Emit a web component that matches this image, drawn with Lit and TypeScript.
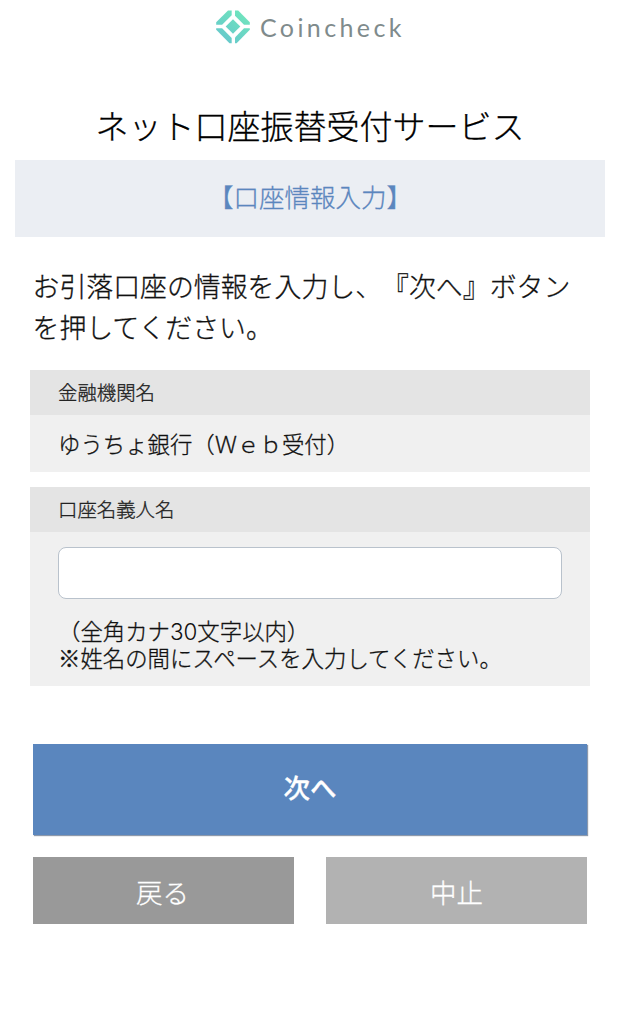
import { LitElement, html, css } from "lit";
import { customElement } from "lit/decorators.js";

@customElement("brand-logo")
class BrandLogo extends LitElement {
  static styles = css`
    :host { display: flex; justify-content: center; height: 56px; }
    .mark { display: block; margin-top: 9px; width: 36px; height: 36px; }
    .name {
      margin: 13px 0 0 9px;
      width: 145px;
      font: 400 25px/28px Lato, sans-serif;
      letter-spacing: 3.4px;
      color: #7f8b8c;
      white-space: nowrap;
    }
  `;
  render() {
    return html`
      <svg class="mark" viewBox="0 0 36 36">
        <defs>
          <linearGradient id="g" gradientUnits="userSpaceOnUse" x1="28" y1="4" x2="8" y2="32">
            <stop offset="0" stop-color="#70e4bd" />
            <stop offset="1" stop-color="#66c8cc" />
          </linearGradient>
        </defs>
        <g fill="url(#g)">
          <path d="M13 1.5H16.7V6.2L7.1 15.8H1.2V13.3Z" />
          <path d="M20 1.5H23.2L34.8 13.3V15.8H29L20 6.8Z" />
          <path d="M1.2 19.3H7.1L16.7 28.9V34.3H14.5L1.2 20.8Z" />
          <path d="M34.8 19.3H29L20 28.4V34.3H21.6L34.8 20.8Z" />
          <path d="M18 10.2L25.3 17.5L18 24.8L10.7 17.5Z" />
        </g>
      </svg>
      <span class="name">Coincheck</span>
    `;
  }
}

@customElement("form-section")
class FormSection extends LitElement {
  static properties = { label: {} };
  declare label: string;
  static styles = css`
    :host { display: block; background: #f0f0f0; }
    .label {
      height: 45px;
      padding: 0 28px;
      box-sizing: border-box;
      background: #e4e4e4;
      color: #222;
      font-size: 19.4px;
      line-height: 44px;
    }
  `;
  render() {
    return html`<div class="label">${this.label}</div><slot></slot>`;
  }
}

@customElement("app-root")
class AppRoot extends LitElement {
  static styles = css`
    :host {
      display: block;
      min-height: 1024px;
      background: #fff;
      color: #111;
      font-family: "Noto Sans CJK JP", sans-serif;
      font-weight: 300;
      text-spacing-trim: space-all;
      -webkit-text-stroke: 0.3px currentColor;
    }
    brand-logo { -webkit-text-stroke: 0; }
    .title {
      margin: 46px 0 0;
      height: 58px;
      text-align: center;
      font-size: 33px;
      font-weight: 300;
      line-height: 47px;
      color: #000;
    }
    .step {
      margin: 0 15px;
      height: 77px;
      background: #ebeef3;
      color: #5b86be;
      text-align: center;
      font-size: 25.5px;
      font-weight: 300;
      line-height: 72px;
    }
    .lead { margin: 28px 0 0 32.5px; height: 105px; font-size: 26.9px; line-height: 41px; white-space: nowrap; }
    .sections { display: flex; flex-direction: column; gap: 15px; margin: 0 30px; }
    .value { height: 57px; padding: 0 28px; font-size: 22.4px; line-height: 56px; }
    .field { padding: 15px 28px 14px; height: 125px; }
    .input {
      display: block;
      box-sizing: border-box;
      width: 504px;
      height: 52px;
      border: 1.5px solid #b9c2cc;
      border-radius: 8px;
      background: #fff;
      outline: none;
    }
    .note { margin: 18px 0 0; font-size: 22.4px; line-height: 27px; white-space: nowrap; }
    .digits { font-family: Inter, sans-serif; line-height: 1; -webkit-text-stroke: 0; }
    .actions { display: grid; grid-template-columns: 261px 261px; column-gap: 32px; row-gap: 22px; margin: 58px 33px 0; }
    button { border: 0; padding: 0; font: inherit; color: #fff; font-size: 26.5px; -webkit-text-stroke: inherit; }
    .next { grid-column: 1 / 3; height: 91px; padding-bottom: 6px; background: #5a86be; font-weight: 500; box-shadow: 1px 1px 1px #8d99ab; }
    .back { height: 67px; padding: 2px 2px 0 0; background: #999; }
    .stop { height: 67px; padding-top: 2px; background: #b2b2b2; }
  `;
  render() {
    return html`
      <brand-logo></brand-logo>
      <h1 class="title">ネット口座振替受付サービス</h1>
      <div class="step">【口座情報入力】</div>
      <p class="lead">お引落口座の情報を入力し、『次へ』ボタン<br />を押してください。</p>
      <div class="sections">
        <form-section label="金融機関名">
          <div class="value">ゆうちょ銀行（Ｗｅｂ受付）</div>
        </form-section>
        <form-section label="口座名義人名">
          <div class="field">
            <input class="input" type="text" />
            <p class="note">（全角カナ<span class="digits">30</span>文字以内）<br />※姓名の間にスペースを入力してください。</p>
          </div>
        </form-section>
      </div>
      <div class="actions">
        <button class="next">次へ</button>
        <button class="back">戻る</button>
        <button class="stop">中止</button>
      </div>
    `;
  }
}
